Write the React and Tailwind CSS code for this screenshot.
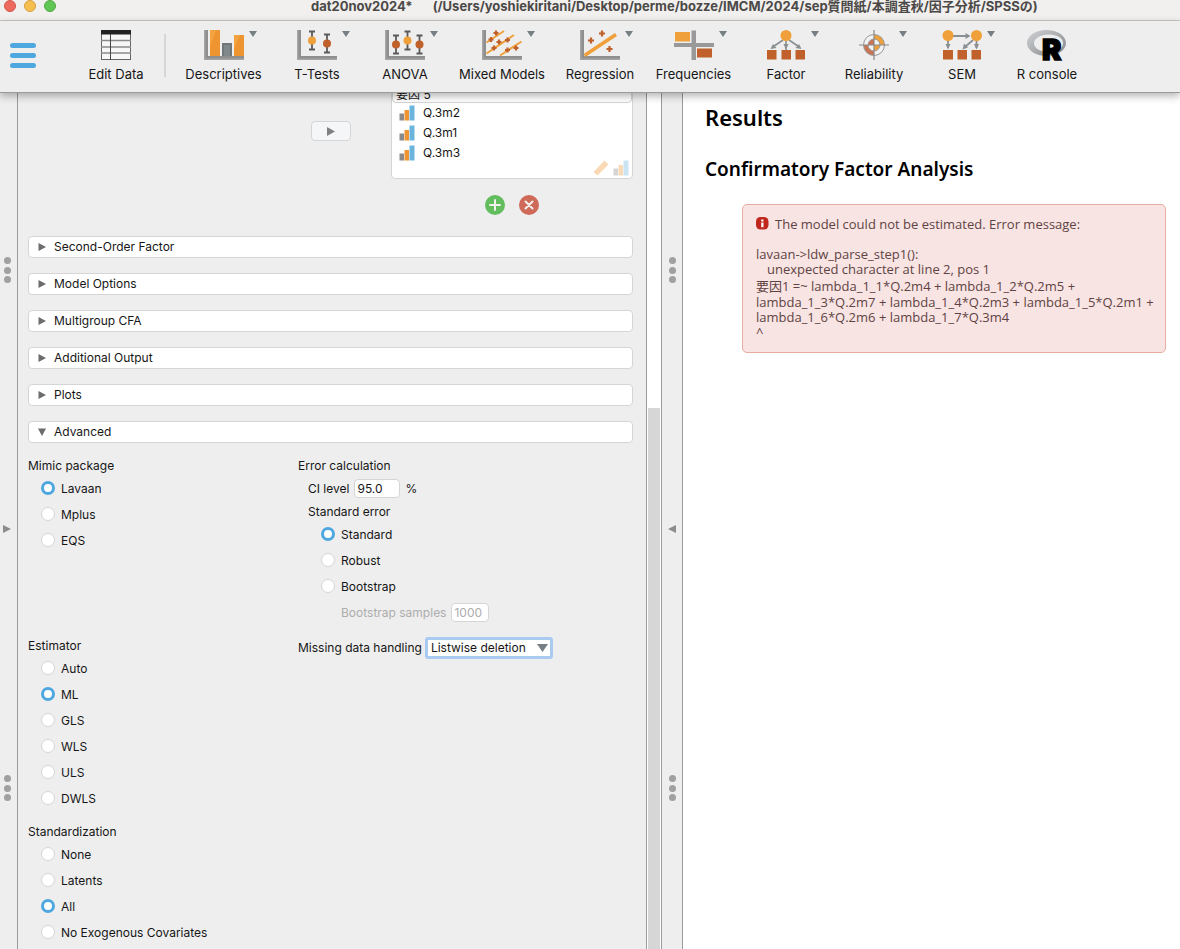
import React, { useState } from "react";

const Axes = () => (
  <>
    <path d="M0 0h4v26h36v4H0z" fill="#8f8f8f" />
    <path d="M0 0h1.5v28.500h38.500v1.500H0z" fill="#a5a5a5" />
  </>
);

const Whisker = ({ x, y, color }) => (
  <g>
    <path d={`M${x} ${y - 9}v18M${x - 3} ${y - 9}h6M${x - 3} ${y + 9}h6`} stroke="#5a5a5a" strokeWidth="1.8" />
    <circle cx={x} cy={y} r="4" fill={color} />
  </g>
);

const Plus = ({ x, y, r = 3 }) => (
  <path d={`M${x - r} ${y}h${r * 2}M${x} ${y - r}v${r * 2}`} stroke="#c0602a" strokeWidth="2.2" />
);

const icons = {
  table: (
    <>
      <rect x="5.500" y="0.500" width="29" height="29" fill="#f7f7f7" stroke="#666" />
      <path d="M5 0h30v4.500H5z" fill="#222" />
      <path d="M5 10.500h30M5 17h30M5 23h30" stroke="#8a8a8a" strokeWidth="1.5" />
      <path d="M14.500 4v26" stroke="#444" />
    </>
  ),
  descriptives: (
    <>
      <Axes />
      <path d="M6 0h10v26H6zM30 5h10v21H30z" fill="#ee9430" />
      <path d="M6 0h6L6 17zM30 5h6l-6 14z" fill="#f3a33f" />
      <path d="M18 13h10v13H18z" fill="#6f777a" />
      <path d="M20 15h6v11h-6z" fill="#80888a" />
    </>
  ),
  ttests: (
    <>
      <Axes />
      <Whisker x={15} y={10.5} color="#f0a03a" />
      <Whisker x={30} y={13.5} color="#c0602a" />
    </>
  ),
  anova: (
    <>
      <Axes />
      <Whisker x={11} y={14.5} color="#c0602a" />
      <Whisker x={22.5} y={10.5} color="#f0a03a" />
      <Whisker x={34.5} y={14.5} color="#c0602a" />
    </>
  ),
  mixed: (
    <>
      <Axes />
      <path d="M4.500 12.500L22 1M4.500 23.500L32 5M18 25.500L39.500 11.500" stroke="#f0a03a" strokeWidth="2" />
      <Plus x={14} y={3} r={2.5} />
      <Plus x={9} y={9.5} r={2.5} />
      <Plus x={17} y={12} r={2.5} />
      <Plus x={25.5} y={10} r={2.5} />
      <Plus x={12} y={18} r={2.5} />
      <Plus x={25.5} y={20} r={2.5} />
      <Plus x={34} y={18} r={2.5} />
    </>
  ),
  regression: (
    <>
      <Axes />
      <path d="M4.500 25.500L36 4.500" stroke="#f0a03a" strokeWidth="3.6" />
      <Plus x={11} y={10.5} />
      <Plus x={22} y={3.5} />
      <Plus x={29.5} y={19} />
    </>
  ),
  frequencies: (
    <>
      <path d="M0 13h40v4H0zM17.500 0.500h4.500v29.500h-4.500z" fill="#999" />
      <path d="M1 2h15v9.500H1z" fill="#f0a03a" />
      <path d="M23 18.500h15v9H23z" fill="#c0602a" />
    </>
  ),
  factor: (
    <>
      <path d="M20 9v14M17 10L6 17.500M23 10l11 7.500" stroke="#8a8f92" strokeWidth="1.6" />
      <path d="M17.500 14h5L20 19.500zM4.500 19l2.500-5 3.500 4zM35.500 19l-2.500-5-3.500 4z" fill="#8a8f92" />
      <circle cx="20" cy="5.500" r="5.500" fill="#f0a03a" />
      <path d="M1 20h9.500v9.500H1zM15.500 20H25v9.500h-9.500zM29.500 20H39v9.500h-9.500z" fill="#c0602a" />
    </>
  ),
  reliability: (
    <>
      <circle cx="20" cy="15" r="10" fill="#f3f3f3" />
      <path d="M20 4.500a10.500 10.500 0 0 1 10.500 10.500H26a6 6 0 0 0-6-6z" fill="#f0a03a" />
      <path d="M20 25.500A10.500 10.500 0 0 1 9.500 15H14a6 6 0 0 0 6 6z" fill="#c97352" />
      <path d="M20 15V9a6 6 0 0 0-6 6z" fill="#c97352" />
      <path d="M20 15v6a6 6 0 0 0 6-6z" fill="#f0a03a" />
      <circle cx="20" cy="15" r="10.500" fill="none" stroke="#999" strokeWidth="1" />
      <circle cx="20" cy="15" r="6" fill="none" stroke="#999" strokeWidth="1" />
      <path d="M20 0v30M5 15h30" stroke="#8a8a8a" strokeWidth="1.200" />
    </>
  ),
  sem: (
    <>
      <path d="M10 6h17M6 10v8M34.500 10v8M31 10l-8 7" stroke="#8a8f92" strokeWidth="1.8" />
      <path d="M23.500 3l5 3-5 3zM3.500 14h5L6 19.500zM32 14h5l-2.500 5.500zM20.500 19.500l1.500-6 4 4z" fill="#8a8f92" />
      <circle cx="6" cy="5.500" r="5.500" fill="#f0a03a" />
      <circle cx="34.500" cy="5.500" r="5.500" fill="#f0a03a" />
      <path d="M1 20h10v9.500H1zM15.500 20h9.500v9.500h-9.500zM29.500 20h9.500v9.500h-9.500z" fill="#c0602a" />
    </>
  ),
  rconsole: (
    <>
      <defs>
        <linearGradient id="ring" x1="0" y1="0" x2="1" y2="1">
          <stop offset="0" stopColor="#cfd1d4" />
          <stop offset="1" stopColor="#84878b" />
        </linearGradient>
      </defs>
      <path
        fillRule="evenodd"
        fill="url(#ring)"
        d="M19.500 0C30.500 0 39 5.800 39 13s-8.500 13-19.500 13S0 20.200 0 13 8.500 0 19.500 0zM22 4.500C13.500 4.500 7 8.300 7 13.300S13.500 22 22 22s14-3.500 14-8.700S30.500 4.500 22 4.500z"
      />
      <text x="15" y="29.500" fontSize="29" fontWeight="900" fontFamily="Inter, sans-serif" fill="#000" stroke="#000" strokeWidth="1.500">R</text>
    </>
  ),
};

const tools = [
  { label: "Descriptives", icon: "descriptives", width: "w-[99px]", menu: true },
  { label: "T-Tests", icon: "ttests", width: "w-[88px]", menu: true },
  { label: "ANOVA", icon: "anova", width: "w-[88px]", menu: true },
  { label: "Mixed Models", icon: "mixed", width: "w-[106px]", menu: true },
  { label: "Regression", icon: "regression", width: "w-[90px]", menu: true },
  { label: "Frequencies", icon: "frequencies", width: "w-[97px]", menu: true },
  { label: "Factor", icon: "factor", width: "w-[88px]", menu: true },
  { label: "Reliability", icon: "reliability", width: "w-[88px]", menu: true },
  { label: "SEM", icon: "sem", width: "w-[88px]", menu: true },
  { label: "R console", icon: "rconsole", width: "w-[82px]", menu: false },
];

const ToolButton = ({ label, icon, width, menu }) => (
  <button type="button" className={`${width} shrink-0 flex flex-col items-center pt-[9px]`}>
    <span className="relative">
      <svg className="overflow-visible" width="40" height="30" viewBox="0 0 40 30">{icons[icon]}</svg>
      {menu && (
        <svg className="absolute left-[45px] top-px" width="8" height="6" viewBox="0 0 8 6">
          <path d="M0 0h8L4 6z" fill="#767f84" />
        </svg>
      )}
    </span>
    <span className="mt-1 leading-5 whitespace-nowrap">{label}</span>
  </button>
);

const TitleBar = () => (
  <header className="flex h-[21px] shrink-0 items-start border-b border-[#c9c7c4] bg-[#f2f0ee]">
    <div className="flex gap-2 pl-1">
      <span className="size-3 rounded-full border border-[#d5544b] bg-[#ed6a5f]" />
      <span className="size-3 rounded-full border border-[#d9a03c] bg-[#f5bf4f]" />
      <span className="size-3 rounded-full border border-[#50a73e] bg-[#62c655]" />
    </div>
    <h1 className="ml-[255px] flex gap-5 whitespace-nowrap font-bold leading-3 text-[#4b4948]">
      <span>dat20nov2024*</span>
      <span>(/Users/yoshiekiritani/Desktop/perme/bozze/IMCM/2024/sep質問紙/本調査秋/因子分析/SPSSの)</span>
    </h1>
  </header>
);

const Toolbar = () => (
  <nav className="relative z-10 flex h-[72px] shrink-0 border-b border-[#9b9b9b] bg-[#eeeeee] shadow-[0_3px_8px_rgba(0,0,0,0.3)]">
    <button type="button" aria-label="Menu" className="ml-[10px] flex w-[26px] flex-col gap-[5px] pt-[22px]">
      <span className="h-[5px] w-full rounded-full bg-[#4fa7e0]" />
      <span className="h-[5px] w-full rounded-full bg-[#4fa7e0]" />
      <span className="h-[5px] w-full rounded-full bg-[#4fa7e0]" />
    </button>
    <div className="ml-[40px] flex">
      <ToolButton label="Edit Data" icon="table" width="w-[80px]" menu={false} />
      <span className="mx-2 mt-[13px] h-[43px] w-[2px] bg-[#d6d6d6]" />
      {tools.map((tool) => (
        <ToolButton key={tool.label} {...tool} />
      ))}
    </div>
  </nav>
);

const Dots = () => (
  <div className="flex h-[30px] flex-col items-center justify-between py-[2px]">
    <span className="size-[7px] rounded-full bg-[#a0a0a0]" />
    <span className="size-[7px] rounded-full bg-[#a0a0a0]" />
    <span className="size-[7px] rounded-full bg-[#a0a0a0]" />
  </div>
);

const Splitter = ({ className, direction }) => (
  <div className={`${className} flex shrink-0 flex-col items-center gap-[240px] border-r border-[#9b9b9b] bg-[#eeeeee] pt-[162px]`}>
    <Dots />
    <button type="button" aria-label={direction === "right" ? "Expand" : "Collapse"}>
      <svg className="block" width="8" height="8" viewBox="0 0 8 8">
        <path d={direction === "right" ? "M0 0l8 4-8 4z" : "M8 0L0 4l8 4z"} fill="#8c8c8c" />
      </svg>
    </button>
    <Dots />
  </div>
);

const OrdinalIcon = ({ faded }) => (
  <svg className={faded ? "opacity-35" : ""} width="16" height="16" viewBox="0 0 16 16">
    <path d="M0.500 8.500h4.500v7H0.500z" fill="#8a8a8a" />
    <path d="M5.500 5h4.500v10.500H5.500z" fill="#ee9430" />
    <path d="M10.500 0.500H15.500v15h-5z" fill="#6cb4dc" />
  </svg>
);

const FactorList = () => (
  <div className="w-[242px] rounded-[4px] border border-[#d5d5d5] bg-white">
    <input
      aria-label="Factor name"
      defaultValue="要因 5"
      className="block h-5 w-full rounded-[4px] border border-[#d5d5d5] bg-white px-[3px]"
    />
    <ul>
      {["Q.3m2", "Q.3m1", "Q.3m3"].map((name) => (
        <li key={name} className="flex h-5 items-center gap-2 pl-[7px]">
          <OrdinalIcon />
          <span>{name}</span>
        </li>
      ))}
    </ul>
    <div className="flex h-[15px] items-end justify-end gap-1 pb-[2px] pr-[3px]">
      <svg className="opacity-35" width="16" height="16" viewBox="0 0 16 16">
        <path d="M0.500 12L11.500 0.500l4 4L4.500 15.500z" fill="#ee9430" />
      </svg>
      <OrdinalIcon faded />
    </div>
  </div>
);

const RoundButton = ({ label, color, d }) => (
  <button type="button" aria-label={label}>
    <svg className="block" width="20" height="20" viewBox="0 0 20 20">
      <circle cx="10" cy="10" r="10" fill={color} />
      <path d={d} stroke="#f3f1ee" strokeWidth="2" strokeLinecap="round" />
    </svg>
  </button>
);

const SectionBar = ({ title, open }) => (
  <button
    type="button"
    aria-expanded={open}
    className="flex h-[22px] w-full items-center gap-2 rounded-[4px] border border-[#d5d5d5] bg-white pl-[9px]"
  >
    <svg width="8" height="8" viewBox="0 0 8 8">
      <path d={open ? "M0 0.500h8L4 8z" : "M0.500 0L8 4 0.500 8z"} fill="#6c6c6c" />
    </svg>
    <span>{title}</span>
  </button>
);

const RadioGroup = ({ name, title, options, initial }) => {
  const [value, setValue] = useState(initial);

  return (
    <fieldset>
      <legend className="block h-5 leading-5">{title}</legend>
      {options.map((option) => (
        <label key={option} className="flex h-[26px] items-center gap-[6px] pl-[13px]">
          <input
            type="radio"
            name={name}
            checked={value === option}
            onChange={() => setValue(option)}
            className="mb-[2px] size-[14px] appearance-none rounded-full border border-[#d5d5d5] bg-white checked:border-[3px] checked:border-[#4fa7e0]"
          />
          {option}
        </label>
      ))}
    </fieldset>
  );
};

const AdvancedOptions = () => (
  <div className="mt-[13px] grid grid-cols-[270px_1fr] gap-y-[10px]">
    <RadioGroup name="mimic" title="Mimic package" options={["Lavaan", "Mplus", "EQS"]} initial="Lavaan" />

    <div>
      <h3 className="leading-5">Error calculation</h3>
      <div className="pl-[10px]">
        <div className="flex h-[26px] items-center gap-[5px]">
          <label htmlFor="ci">CI level</label>
          <input id="ci" defaultValue="95.0" className="mb-[2px] h-[19px] w-[46px] rounded-[4px] border border-[#d5d5d5] bg-white px-[2px]" />
          <span>%</span>
        </div>
        <RadioGroup name="se" title="Standard error" options={["Standard", "Robust", "Bootstrap"]} initial="Standard" />
        <div className="flex h-[26px] items-center gap-[5px] pl-[33px] text-[#adadad]">
          <label htmlFor="samples">Bootstrap samples</label>
          <input id="samples" disabled defaultValue="1000" className="mb-[2px] h-[19px] w-[38px] rounded-[4px] border border-[#d5d5d5] bg-white px-[2px]" />
        </div>
      </div>
    </div>

    <RadioGroup name="estimator" title="Estimator" options={["Auto", "ML", "GLS", "WLS", "ULS", "DWLS"]} initial="ML" />

    <div className="flex h-6 items-center gap-[3px]">
      <label htmlFor="missing">Missing data handling</label>
      <div className="relative">
        <select
          id="missing"
          className="block h-[22px] w-[128px] appearance-none rounded-[3px] border-[3px] border-[#a9caf1] bg-white px-[3px] leading-4"
        >
          <option>Listwise deletion</option>
        </select>
        <svg className="pointer-events-none absolute right-[5px] top-[7px]" width="11" height="8" viewBox="0 0 11 8">
          <path d="M0 0h11L5.500 8z" fill="#767f84" />
        </svg>
      </div>
    </div>

    <RadioGroup name="standardization" title="Standardization" options={["None", "Latents", "All", "No Exogenous Covariates"]} initial="All" />
  </div>
);

const FormPanel = () => (
  <section className="w-[628px] shrink-0 overflow-hidden bg-[#eeeeee] pl-[10px] pr-[13px] text-xs">
    {/* scrolled down, so the factor name field is cut by the toolbar */}
    <div className="-mt-[11px] flex items-start justify-between">
      <button
        type="button"
        aria-label="Assign variable"
        className="ml-[283px] mt-[39px] flex h-5 w-10 items-center justify-center rounded-[4px] border border-[#d5d5d5] bg-[#f5f6f8]"
      >
        <svg width="8" height="9" viewBox="0 0 8 9">
          <path d="M0 0l8 4.500L0 9z" fill="#808080" />
        </svg>
      </button>
      <FactorList />
    </div>
    <div className="flex justify-end gap-[14px] pb-[21px] pr-[94px] pt-4">
      <RoundButton label="Add factor" color="#62bd5c" d="M10 5v10M5 10h10" />
      <RoundButton label="Remove factor" color="#cf6a5a" d="M6.500 6.500l7 7M13.500 6.500l-7 7" />
    </div>
    <div className="flex flex-col gap-[15px]">
      {["Second-Order Factor", "Model Options", "Multigroup CFA", "Additional Output", "Plots"].map((title) => (
        <SectionBar key={title} title={title} open={false} />
      ))}
      <SectionBar title="Advanced" open />
    </div>
    <AdvancedOptions />
  </section>
);

const Results = () => (
  <main className="min-w-0 flex-1 bg-white pl-[22px] pr-[14px] pt-[10px] font-['Noto_Sans','Noto_Sans_CJK_JP',sans-serif]">
    <h1 className="text-[22px] font-semibold leading-7 text-black">Results</h1>
    <h2 className="mt-6 text-[19px] font-semibold leading-7 text-black">Confirmatory Factor Analysis</h2>
    <div className="ml-[37px] mt-[21px] rounded-[5px] border border-[#e8ab9f] bg-[#f8e4e3] py-3 pl-[13px] pr-2 font-['Open_Sans','Noto_Sans_CJK_JP',sans-serif] text-[13px] leading-[15px] text-[#5f4343]">
      <p className="flex gap-[6px] leading-[15px]">
        <svg width="13" height="13" viewBox="0 0 13 13">
          <rect width="12.500" height="12.500" rx="4.500" fill="#c1271d" />
          <path d="M5.200 2.500h2.300v2H5.200zM5.200 5.500h2.300v4.700H5.200z" fill="#fff" />
        </svg>
        The model could not be estimated. Error message:
      </p>
      <p className="mt-[15px]">lavaan-&gt;ldw_parse_step1():</p>
      <p className="pl-[11px]">unexpected character at line 2, pos 1</p>
      <p className="leading-[18px]">要因1 =~ lambda_1_1*Q.2m4 + lambda_1_2*Q.2m5 +</p>
      <p>lambda_1_3*Q.2m7 + lambda_1_4*Q.2m3 + lambda_1_5*Q.2m1 +</p>
      <p>lambda_1_6*Q.2m6 + lambda_1_7*Q.3m4</p>
      <p>^</p>
    </div>
  </main>
);

export default function App() {
  return (
    <div className="flex h-screen flex-col overflow-hidden bg-white font-[Inter,'Noto_Sans_CJK_JP',sans-serif] text-[13px] text-[#161616]">
      <TitleBar />
      <Toolbar />
      <div className="flex min-h-0 flex-1 overflow-hidden">
        <Splitter className="w-[18px] pr-[3px]" direction="right" />
        <FormPanel />
        <div className="flex w-4 shrink-0 flex-col border-x border-[#9b9b9b] bg-white px-px pt-[315px]">
          <div className="flex-1 bg-[#d6d6d6]" />
        </div>
        <Splitter className="w-[21px]" direction="left" />
        <Results />
      </div>
    </div>
  );
}
